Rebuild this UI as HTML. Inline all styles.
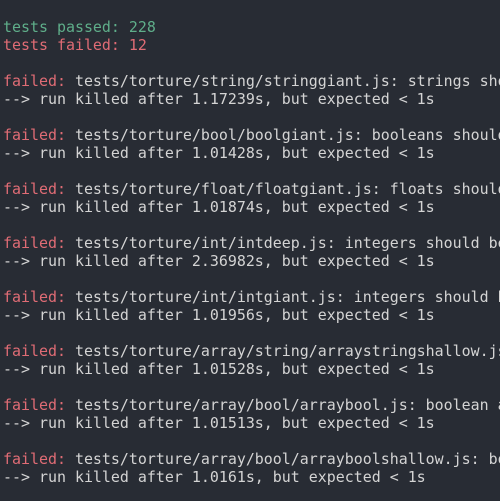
<!DOCTYPE html>
<html><head><style>
html,body{margin:0;padding:0;background:#282c34;width:500px;height:501px;overflow:hidden}
pre{margin:0;padding:18px 0 0 3px;width:497px;overflow:hidden;font-family:"DejaVu Sans Mono","Liberation Mono",monospace;font-size:14.95px;line-height:18px;color:#d4d4d4;white-space:pre}
.g{color:#5fae8a}.r{color:#e06c75}
</style></head><body><pre><span class="g">tests passed: 228</span>
<span class="r">tests failed: 12</span>

<span class="r">failed:</span> tests/torture/string/stringgiant.js: strings sho
--> run killed after 1.17239s, but expected &lt; 1s

<span class="r">failed:</span> tests/torture/bool/boolgiant.js: booleans should
--> run killed after 1.01428s, but expected &lt; 1s

<span class="r">failed:</span> tests/torture/float/floatgiant.js: floats should
--> run killed after 1.01874s, but expected &lt; 1s

<span class="r">failed:</span> tests/torture/int/intdeep.js: integers should be
--> run killed after 2.36982s, but expected &lt; 1s

<span class="r">failed:</span> tests/torture/int/intgiant.js: integers should b
--> run killed after 1.01956s, but expected &lt; 1s

<span class="r">failed:</span> tests/torture/array/string/arraystringshallow.js
--> run killed after 1.01528s, but expected &lt; 1s

<span class="r">failed:</span> tests/torture/array/bool/arraybool.js: boolean a
--> run killed after 1.01513s, but expected &lt; 1s

<span class="r">failed:</span> tests/torture/array/bool/arrayboolshallow.js: bo
--> run killed after 1.0161s, but expected &lt; 1s
</pre></body></html>
